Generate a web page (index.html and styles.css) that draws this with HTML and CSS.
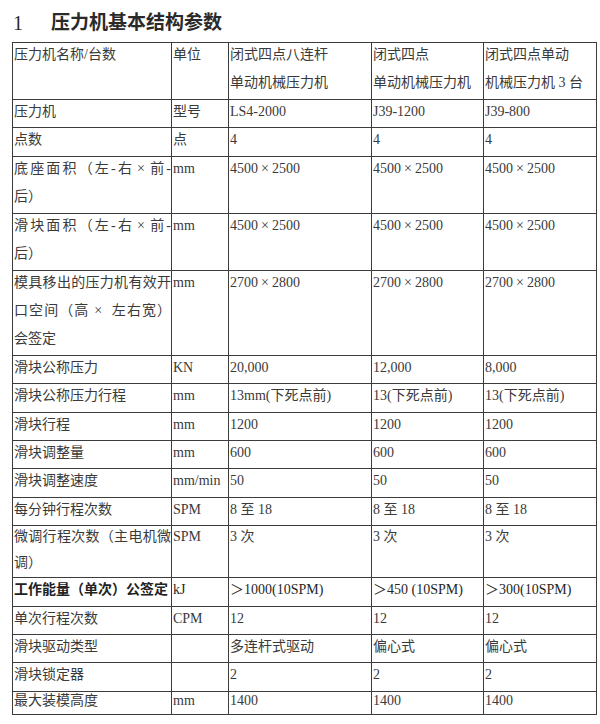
FILE: index.html
```html
<!DOCTYPE html>
<html lang="zh-CN">
<head>
<meta charset="utf-8">
<title>压力机基本结构参数</title>
<link rel="stylesheet" href="styles.css">
</head>
<body>
<h1 class="title"><span class="num">1</span><span>压力机基本结构参数</span></h1>
<table class="spec">
  <colgroup>
    <col class="c-name"><col class="c-unit"><col class="c-a"><col class="c-b"><col class="c-c">
  </colgroup>
  <tbody>
    <tr class="multi"><td><div class="c">压力机名称/台数</div></td><td><div class="c">单位</div></td><td><div class="c">闭式四点八连杆<br>单动机械压力机</div></td><td><div class="c">闭式四点<br>单动机械压力机</div></td><td><div class="c">闭式四点单动<br>机械压力机 3 台</div></td></tr>
    <tr><td><div class="c">压力机</div></td><td><div class="c">型号</div></td><td><div class="c">LS4-2000</div></td><td><div class="c">J39-1200</div></td><td><div class="c">J39-800</div></td></tr>
    <tr><td><div class="c">点数</div></td><td><div class="c">点</div></td><td><div class="c">4</div></td><td><div class="c">4</div></td><td><div class="c">4</div></td></tr>
    <tr class="multi"><td><div class="c">底座面积（左-右<span class="x">×</span>前-<wbr>后）</div></td><td><div class="c">mm</div></td><td><div class="c">4500<span class="x">×</span>2500</div></td><td><div class="c">4500<span class="x">×</span>2500</div></td><td><div class="c">4500<span class="x">×</span>2500</div></td></tr>
    <tr class="multi"><td><div class="c">滑块面积（左-右<span class="x">×</span>前-<wbr>后）</div></td><td><div class="c">mm</div></td><td><div class="c">4500<span class="x">×</span>2500</div></td><td><div class="c">4500<span class="x">×</span>2500</div></td><td><div class="c">4500<span class="x">×</span>2500</div></td></tr>
    <tr class="multi"><td><div class="c">模具移出的压力机有效开口空间（高<span class="xw">×</span> 左右宽）会签定</div></td><td><div class="c">mm</div></td><td><div class="c">2700<span class="x">×</span>2800</div></td><td><div class="c">2700<span class="x">×</span>2800</div></td><td><div class="c">2700<span class="x">×</span>2800</div></td></tr>
    <tr><td><div class="c">滑块公称压力</div></td><td><div class="c">KN</div></td><td><div class="c">20,000</div></td><td><div class="c">12,000</div></td><td><div class="c">8,000</div></td></tr>
    <tr><td><div class="c">滑块公称压力行程</div></td><td><div class="c">mm</div></td><td><div class="c">13mm(下死点前)</div></td><td><div class="c">13(下死点前)</div></td><td><div class="c">13(下死点前)</div></td></tr>
    <tr><td><div class="c">滑块行程</div></td><td><div class="c">mm</div></td><td><div class="c">1200</div></td><td><div class="c">1200</div></td><td><div class="c">1200</div></td></tr>
    <tr><td><div class="c">滑块调整量</div></td><td><div class="c">mm</div></td><td><div class="c">600</div></td><td><div class="c">600</div></td><td><div class="c">600</div></td></tr>
    <tr><td><div class="c">滑块调整速度</div></td><td><div class="c">mm/min</div></td><td><div class="c">50</div></td><td><div class="c">50</div></td><td><div class="c">50</div></td></tr>
    <tr><td><div class="c">每分钟行程次数</div></td><td><div class="c">SPM</div></td><td><div class="c">8 至 18</div></td><td><div class="c">8 至 18</div></td><td><div class="c">8 至 18</div></td></tr>
    <tr class="multi tight"><td><div class="c">微调行程次数（主电机微调）</div></td><td><div class="c">SPM</div></td><td><div class="c">3 次</div></td><td><div class="c">3 次</div></td><td><div class="c">3 次</div></td></tr>
    <tr class="strong"><td><div class="c bold">工作能量（单次）公签定</div></td><td><div class="c">kJ</div></td><td><div class="c">＞1000(10SPM)</div></td><td><div class="c">＞450 (10SPM)</div></td><td><div class="c">＞300(10SPM)</div></td></tr>
    <tr><td><div class="c">单次行程次数</div></td><td><div class="c">CPM</div></td><td><div class="c">12</div></td><td><div class="c">12</div></td><td><div class="c">12</div></td></tr>
    <tr><td><div class="c">滑块驱动类型</div></td><td><div class="c"></div></td><td><div class="c">多连杆式驱动</div></td><td><div class="c">偏心式</div></td><td><div class="c">偏心式</div></td></tr>
    <tr><td><div class="c">滑块锁定器</div></td><td><div class="c"></div></td><td><div class="c">2</div></td><td><div class="c">2</div></td><td><div class="c">2</div></td></tr>
    <tr class="last"><td><div class="c">最大装模高度</div></td><td><div class="c">mm</div></td><td><div class="c">1400</div></td><td><div class="c">1400</div></td><td><div class="c">1400</div></td></tr>
  </tbody>
</table>
</body>
</html>
```
FILE: styles.css
```css
html, body {
  margin: 0;
  padding: 0;
  background: #ffffff;
}
body {
  font-family: "Liberation Serif", "Noto Sans CJK SC", serif;
  color: #3a3a3a;
  width: 600px;
  height: 724px;
  overflow: hidden;
}
.title {
  margin: 0;
  padding: 10px 0 0 13px;
  height: 34px;
  box-sizing: border-box;
  font-size: 19px;
  line-height: 26px;
  font-weight: bold;
  color: #2a2a2a;
  display: flex;
  gap: 28px;
}
.title .num {
  font-weight: normal;
  font-size: 20px;
}
.spec {
  margin: 8px 0 0 12px;
  border-collapse: collapse;
  table-layout: fixed;
  width: 584px;
  font-size: 14px;
}
.c-name { width: 159px; }
.c-unit { width: 57px; }
.c-a { width: 143px; }
.c-b { width: 112px; }
.c-c { width: 113px; }
.spec td {
  border: 1px solid #3c3c3c;
  padding: 0 0 0 1px;
  vertical-align: top;
  line-height: 27.4px;
}
.spec tr.multi td { line-height: 28px; }
.spec tr.tight td { line-height: 25.5px; }
.spec tr.last td { line-height: 22px; }
.spec td:first-child .c { text-align: justify; }
.c {
  margin-top: -2px;
  padding-bottom: 2px;
}
.x {
  padding: 0 3px;
}
.xw {
  padding: 0 5px;
}
.bold {
  font-weight: bold;
  color: #222;
}
.strong td { color: #262626; }
```
